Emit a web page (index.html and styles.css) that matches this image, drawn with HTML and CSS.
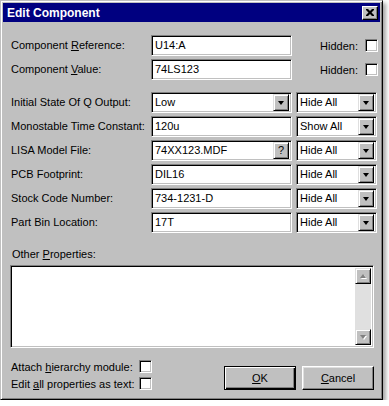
FILE: index.html
```html
<!DOCTYPE html>
<html>
<head>
<meta charset="utf-8">
<title>Edit Component</title>
<link rel="stylesheet" href="styles.css">
</head>
<body>
<div class="window">
  <div class="titlebar">
    <span class="title">Edit Component</span>
    <span class="close"><svg width="8" height="7" viewBox="0 0 8 7"><path d="M0 0h2l2 2 2-2h2v1l-2.5 2.5L8 6v1H6L4 5 2 7H0V6l2.5-2.5L0 1z" fill="#000"/></svg></span>
  </div>
  <div class="content">
    <div class="grid top">
      <div class="label"><span>Component <u>R</u>eference:</span></div>
      <div class="field"><span class="val">U14:A</span></div>
      <div class="hidden"><span>Hidden:</span><span class="check"></span></div>
      <div class="label"><span>Component <u>V</u>alue:</span></div>
      <div class="field"><span class="val">74LS123</span></div>
      <div class="hidden"><span>Hidden:</span><span class="check"></span></div>
    </div>
    <div class="grid props">
      <div class="label"><span>Initial State Of Q Output:</span></div>
      <div class="field"><span class="val">Low</span><span class="btn arrow"></span></div>
      <div class="field"><span class="val">Hide All</span><span class="btn arrow"></span></div>

      <div class="label"><span>Monostable Time Constant:</span></div>
      <div class="field"><span class="val">120u</span></div>
      <div class="field"><span class="val">Show All</span><span class="btn arrow"></span></div>

      <div class="label"><span>LISA Model File:</span></div>
      <div class="field"><span class="val">74XX123.MDF</span><span class="btn q">?</span></div>
      <div class="field"><span class="val">Hide All</span><span class="btn arrow"></span></div>

      <div class="label"><span>PCB Footprint:</span></div>
      <div class="field"><span class="val">DIL16</span></div>
      <div class="field"><span class="val">Hide All</span><span class="btn arrow"></span></div>

      <div class="label"><span>Stock Code Number:</span></div>
      <div class="field"><span class="val">734-1231-D</span></div>
      <div class="field"><span class="val">Hide All</span><span class="btn arrow"></span></div>

      <div class="label"><span>Part Bin Location:</span></div>
      <div class="field"><span class="val">17T</span></div>
      <div class="field"><span class="val">Hide All</span><span class="btn arrow"></span></div>
    </div>
    <div class="other-label">Other <u>P</u>roperties:</div>
    <div class="textarea">
      <div class="text"></div>
      <div class="vscroll">
        <span class="sbtn"><span class="tri up"></span></span>
        <span class="track"></span>
        <span class="sbtn"><span class="tri down"></span></span>
      </div>
    </div>
    <div class="footer">
      <div class="checks">
        <div class="crow"><span class="clabel">Attach <u>h</u>ierarchy module:</span><span class="check"></span></div>
        <div class="crow"><span class="clabel">Edit <u>a</u>ll properties as text:</span><span class="check"></span></div>
      </div>
      <div class="buttons">
        <div class="pbtn default"><span class="inner"><u>O</u>K</span></div>
        <div class="pbtn"><span class="inner"><u>C</u>ancel</span></div>
      </div>
    </div>
  </div>
</div>
</body>
</html>
```

FILE: styles.css
```css
* { box-sizing: border-box; }
html, body { margin: 0; padding: 0; background: #ffffff; }
body {
  font-family: "Liberation Sans", Arial, sans-serif;
  font-size: 11px;
  color: #000;
}
u { text-decoration: underline; text-underline-offset: 1px; }

.window {
  width: 383px;
  height: 400px;
  background: #c0c0c0;
  border: 1px solid;
  border-color: #c0c0c0 #000 #000 #c0c0c0;
  box-shadow: inset 1px 1px #fff, inset -1px -1px #808080, 3px 3px 4px rgba(0,0,0,0.35);
  padding: 2px;
  display: flex;
  flex-direction: column;
}

.titlebar {
  height: 19px;
  background: #000080;
  display: flex;
  align-items: center;
  justify-content: space-between;
  padding: 0 2px 0 4px;
}
.title {
  color: #fff;
  font-weight: bold;
  font-size: 12px;
}
.close {
  width: 16px;
  height: 14px;
  background: #c0c0c0;
  border: 1px solid;
  border-color: #fff #000 #000 #fff;
  box-shadow: inset -1px -1px #808080;
  display: flex;
  align-items: center;
  justify-content: center;
  padding-bottom: 1px;
}
.close svg { display: block; }

.content {
  padding-left: 8px;
}

.grid {
  display: grid;
  grid-template-columns: 136px 141px 81px;
  column-gap: 4px;
  grid-auto-rows: 21px;
  row-gap: 3px;
}
.top { margin-top: 13px; }
.props { margin-top: 12px; }

.label {
  display: flex;
  align-items: center;
  padding-bottom: 1px;
  white-space: nowrap;
}

.field {
  background: #fff;
  border: 1px solid;
  border-color: #808080 #fff #fff #808080;
  box-shadow: inset 1px 1px #000, inset -1px -1px #c0c0c0;
  display: flex;
  align-items: center;
  padding: 2px 2px 2px 3px;
}
.val { flex: 1; white-space: nowrap; padding-bottom: 1px; }

.btn {
  width: 16px;
  height: 17px;
  background: #c0c0c0;
  border: 1px solid;
  border-color: #dfdfdf #000 #000 #dfdfdf;
  box-shadow: inset 1px 1px #fff, inset -1px -1px #808080;
  display: flex;
  align-items: center;
  justify-content: center;
}
.arrow::after {
  content: "";
  width: 0;
  height: 0;
  border-left: 3.5px solid transparent;
  border-right: 3.5px solid transparent;
  border-top: 4px solid #000;
  margin-top: 1px;
}
.q { font-size: 11px; line-height: 1; padding-bottom: 1px; }

.hidden {
  display: flex;
  align-items: center;
  justify-content: flex-end;
  margin-right: -1px;
  gap: 7px;
}

.check {
  width: 13px;
  height: 13px;
  background: #fff;
  border: 1px solid;
  border-color: #808080 #fff #fff #808080;
  box-shadow: inset 1px 1px #000, inset -1px -1px #c0c0c0;
  display: inline-block;
  flex: none;
}

.other-label {
  margin-top: 15px;
  height: 13px;
  line-height: 13px;
  padding-left: 1px;
  margin-bottom: 4px;
}

.textarea {
  margin-left: -1px;
  width: 364px;
  height: 83px;
  background: #fff;
  border: 1px solid;
  border-color: #808080 #fff #fff #808080;
  box-shadow: inset 1px 1px #000, inset -1px -1px #c0c0c0;
  display: flex;
  padding: 2px;
}
.text { flex: 1; }
.vscroll {
  width: 16px;
  display: flex;
  flex-direction: column;
  background: #e0e0e0;
}
.track { flex: 1; }
.sbtn {
  width: 16px;
  height: 16px;
  background: #c0c0c0;
  border: 1px solid;
  border-color: #dfdfdf #000 #000 #dfdfdf;
  box-shadow: inset 1px 1px #fff, inset -1px -1px #808080;
  display: flex;
  align-items: center;
  justify-content: center;
}
.tri { width: 0; height: 0; }
.tri.up {
  border-left: 3.5px solid transparent;
  border-right: 3.5px solid transparent;
  border-bottom: 4px solid #808080;
  filter: drop-shadow(1px 1px 0 #fff);
}
.tri.down {
  border-left: 3.5px solid transparent;
  border-right: 3.5px solid transparent;
  border-top: 4px solid #808080;
  filter: drop-shadow(1px 1px 0 #fff);
}

.footer {
  display: flex;
  justify-content: space-between;
}
.checks {
  margin-top: 12px;
  display: flex;
  flex-direction: column;
  gap: 4px;
}
.crow {
  display: flex;
  align-items: center;
  height: 13px;
}
.clabel { width: 128px; white-space: nowrap; }

.buttons {
  margin-top: 18px;
  margin-right: 6px;
  display: flex;
  gap: 6px;
}
.pbtn {
  width: 72px;
  height: 24px;
  background: #c0c0c0;
  border: 1px solid;
  border-color: #fff #000 #000 #fff;
  box-shadow: inset -1px -1px #808080, inset 1px 1px #dfdfdf;
  display: flex;
  align-items: center;
  justify-content: center;
}
.pbtn.default {
  border: 1px solid #000;
  box-shadow: inset 1px 1px #fff, inset -1px -1px #000, inset -2px -2px #808080;
}
.inner { padding-bottom: 1px; }
```
